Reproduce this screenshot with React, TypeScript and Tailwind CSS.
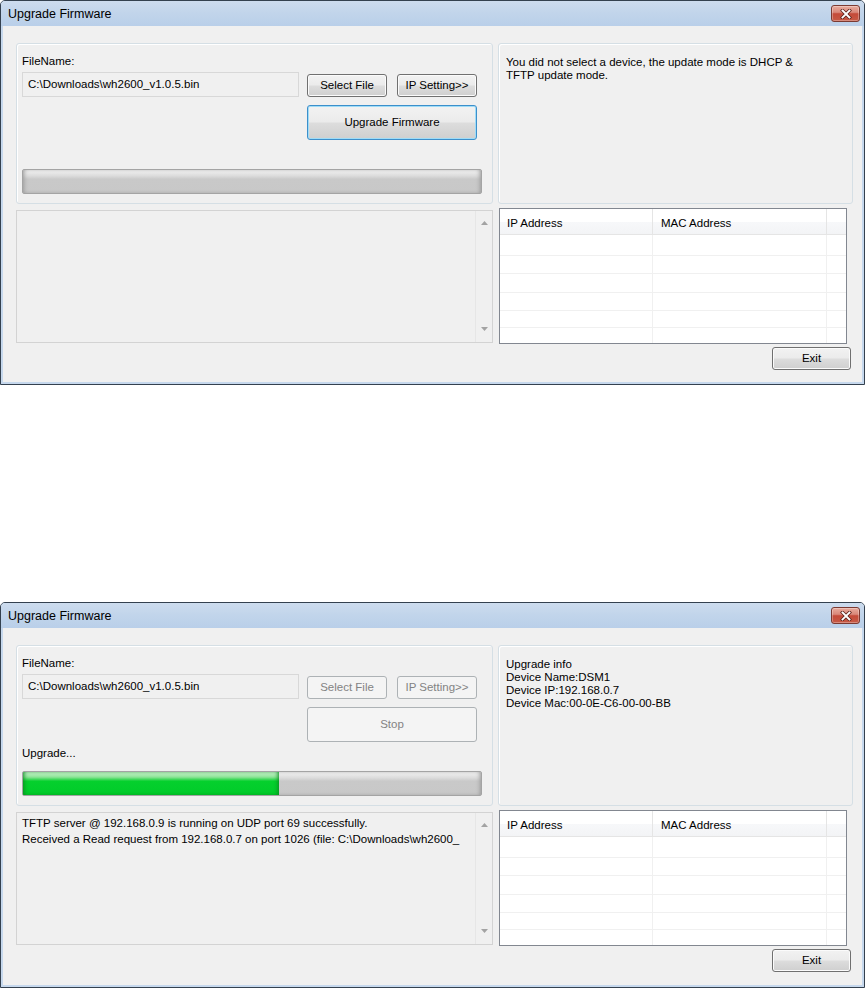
import React from 'react';

type Mode = 'idle' | 'upgrading';

function CloseButton() {
  return (
    <div className="flex h-[17px] w-[29px] items-center justify-center rounded-[3px] border border-[#7b3a32] bg-[linear-gradient(to_bottom,#e9ab9d_0%,#d9887a_42%,#c44a39_52%,#c75a46_100%)] shadow-[inset_0_0_0_1px_rgba(255,255,255,0.3)]">
      <svg width="12" height="10" viewBox="0 0 12 10">
        <path d="M2.5 1.5 L9.5 8.5 M9.5 1.5 L2.5 8.5" stroke="#5b2019" strokeWidth="3.4" strokeLinecap="square" />
        <path d="M2.5 1.5 L9.5 8.5 M9.5 1.5 L2.5 8.5" stroke="#ffffff" strokeWidth="1.9" strokeLinecap="square" />
      </svg>
    </div>
  );
}

function WinButton({
  label,
  disabled = false,
  isDefault = false,
  className = '',
}: {
  label: string;
  disabled?: boolean;
  isDefault?: boolean;
  className?: string;
}) {
  let look =
    'border-[#707070] bg-[linear-gradient(to_bottom,#f2f2f2_0%,#ebebeb_49%,#dddddd_51%,#cfcfcf_100%)] text-black shadow-[inset_0_0_0_1px_#fbfbfb]';
  if (isDefault) {
    look =
      'border-[#3c8fcb] bg-[linear-gradient(to_bottom,#f2f2f2_0%,#ebebeb_49%,#dddddd_51%,#cfcfcf_100%)] text-black shadow-[inset_0_0_0_1px_#9fdcf7]';
  }
  if (disabled) {
    look = 'border-[#adb2b5] bg-[#f4f4f4] text-[#838383]';
  }
  return (
    <div className={`flex items-center justify-center rounded-[3px] border text-[11.5px] ${look} ${className}`}>
      {label}
    </div>
  );
}

function ScrollArrow({ up }: { up: boolean }) {
  return (
    <svg width="7" height="4" viewBox="0 0 7 4">
      <path d={up ? 'M0 4 L3.5 0 L7 4 Z' : 'M0 0 L3.5 4 L7 0 Z'} fill="#a3a3a3" />
    </svg>
  );
}

function ProgressBar({ value }: { value: number }) {
  return (
    <div className="flex h-[25px] w-[460px] overflow-hidden rounded-[2px] border border-[#a4a4a4] bg-[linear-gradient(to_bottom,#f2f2f2_0%,#dcdcdc_25%,#c9c9c9_40%,#c8c8c8_100%)] shadow-[inset_3px_0_4px_-2px_#9a9a9a,inset_-3px_0_4px_-2px_#9a9a9a]">
      {value > 0 && (
        <div
          className="h-full bg-[linear-gradient(to_bottom,#cdf3d1_0%,#8de497_22%,#05d02d_40%,#00cb2a_100%)] shadow-[inset_3px_0_4px_-2px_#0a8a1f,inset_-3px_0_4px_-2px_#0a8a1f]"
          style={{ width: `${value}%` }}
        />
      )}
    </div>
  );
}

function DeviceTable() {
  const rows = ['h-[21px]', 'h-[18px]', 'h-[19px]', 'h-[18px]', 'h-[17px]'];
  return (
    <div className="flex h-[136px] w-[348px] flex-col border border-[#828790] bg-white">
      <div className="flex h-[26px] border-b border-[#e5e5e5] bg-[linear-gradient(to_bottom,#ffffff_0%,#ffffff_50%,#f7f8fa_51%,#f3f4f6_100%)] text-black">
        <div className="flex w-[153px] items-center border-r border-[#e5e5e5] pl-[7px] pt-[3px]">IP Address</div>
        <div className="flex w-[174px] items-center border-r border-[#e5e5e5] pl-[8px] pt-[3px]">MAC Address</div>
        <div className="flex-1" />
      </div>
      {rows.map((h, i) => (
        <div key={i} className={`flex ${h} border-b border-[#f0f0f0]`}>
          <div className="w-[153px] border-r border-[#f0f0f0]" />
          <div className="w-[174px] border-r border-[#f0f0f0]" />
        </div>
      ))}
      <div className="flex flex-1">
        <div className="w-[153px] border-r border-[#f0f0f0]" />
        <div className="w-[174px] border-r border-[#f0f0f0]" />
      </div>
    </div>
  );
}

function FirmwareWindow({ mode, height }: { mode: Mode; height: string }) {
  const busy = mode === 'upgrading';
  return (
    <div className={`flex w-[865px] flex-col rounded-t-[5px] border border-[#34414f] bg-[#c6d8ed] ${height}`}>
      {/* title bar */}
      <div className="flex h-[25px] items-center justify-between rounded-t-[4px] bg-[linear-gradient(to_bottom,#cddcee_0%,#c2d5eb_45%,#b9cfe9_100%)] pl-[7px] pr-[4px]">
        <span className="pt-[1px] text-[12.5px] text-black">Upgrade Firmware</span>
        <CloseButton />
      </div>

      {/* client */}
      <div className="mx-[2px] mb-[2px] flex flex-1 flex-col bg-[#f0f0f0] pl-[13px] pt-[17px] text-[11.5px] leading-[13px] text-black">
        <div className="flex gap-[5px]">
          {/* left group */}
          <div className="flex h-[161px] w-[477px] flex-col rounded-[3px] border border-[#d5dfe5] pl-[5px] pt-[11px] shadow-[inset_1px_1px_0_#ffffff]">
            <div className="h-[13px]">FileName:</div>
            <div className="mt-[4px] flex items-start">
              <div className="flex h-[25px] w-[277px] items-center border border-[#d8d8d8] bg-[#f0f0f0] pl-[5px]">
                C:\Downloads\wh2600_v1.0.5.bin
              </div>
              <WinButton label="Select File" disabled={busy} className="ml-[8px] mt-[2px] h-[23px] w-[80px]" />
              <WinButton label="IP Setting>>" disabled={busy} className="ml-[10px] mt-[2px] h-[23px] w-[80px]" />
            </div>
            <WinButton
              label={busy ? 'Stop' : 'Upgrade Firmware'}
              disabled={busy}
              isDefault={!busy}
              className="ml-[285px] mt-[8px] h-[35px] w-[170px]"
            />
            <div className="mt-[5px] h-[13px]">{busy ? 'Upgrade...' : ''}</div>
            <div className="mt-[11px]">
              <ProgressBar value={busy ? 56 : 0} />
            </div>
          </div>

          {/* right group */}
          <div className="h-[161px] w-[355px] rounded-[3px] border border-[#d5dfe5] pl-[7px] pt-[12px] shadow-[inset_1px_1px_0_#ffffff]">
            {busy ? (
              <>
                <div>Upgrade info</div>
                <div>Device Name:DSM1</div>
                <div>Device IP:192.168.0.7</div>
                <div>Device Mac:00-0E-C6-00-00-BB</div>
              </>
            ) : (
              <>
                <div>You did not select a device, the update mode is DHCP &amp;</div>
                <div>TFTP update mode.</div>
              </>
            )}
          </div>
        </div>

        <div className="mt-[4px] flex items-start gap-[6px]">
          {/* log box */}
          <div className="mt-[2px] flex h-[133px] w-[477px] border border-[#d3d3d3] bg-[#f0f0f0]">
            <div className="min-w-0 flex-1 overflow-hidden whitespace-nowrap pl-[5px] pt-[2px] leading-[16px]">
              {busy && (
                <>
                  <div>TFTP server @ 192.168.0.9 is running on UDP port 69 successfully.</div>
                  <div>Received a Read request from 192.168.0.7 on port 1026 (file: C:\Downloads\wh2600_</div>
                </>
              )}
            </div>
            <div className="flex w-[17px] flex-col items-center justify-between border-l border-[#e6e6e6] pb-[11px] pt-[10px]">
              <ScrollArrow up />
              <ScrollArrow up={false} />
            </div>
          </div>

          <DeviceTable />
        </div>

        <div className="mt-[3px] flex justify-end pr-[11px]">
          <WinButton label="Exit" className="h-[23px] w-[79px]" />
        </div>
      </div>
    </div>
  );
}

export default function App() {
  return (
    <div className="flex h-[988px] w-[865px] flex-col justify-between bg-white font-['Liberation_Sans',Arial,sans-serif]">
      <FirmwareWindow mode="idle" height="h-[385px]" />
      <FirmwareWindow mode="upgrading" height="h-[386px]" />
    </div>
  );
}
